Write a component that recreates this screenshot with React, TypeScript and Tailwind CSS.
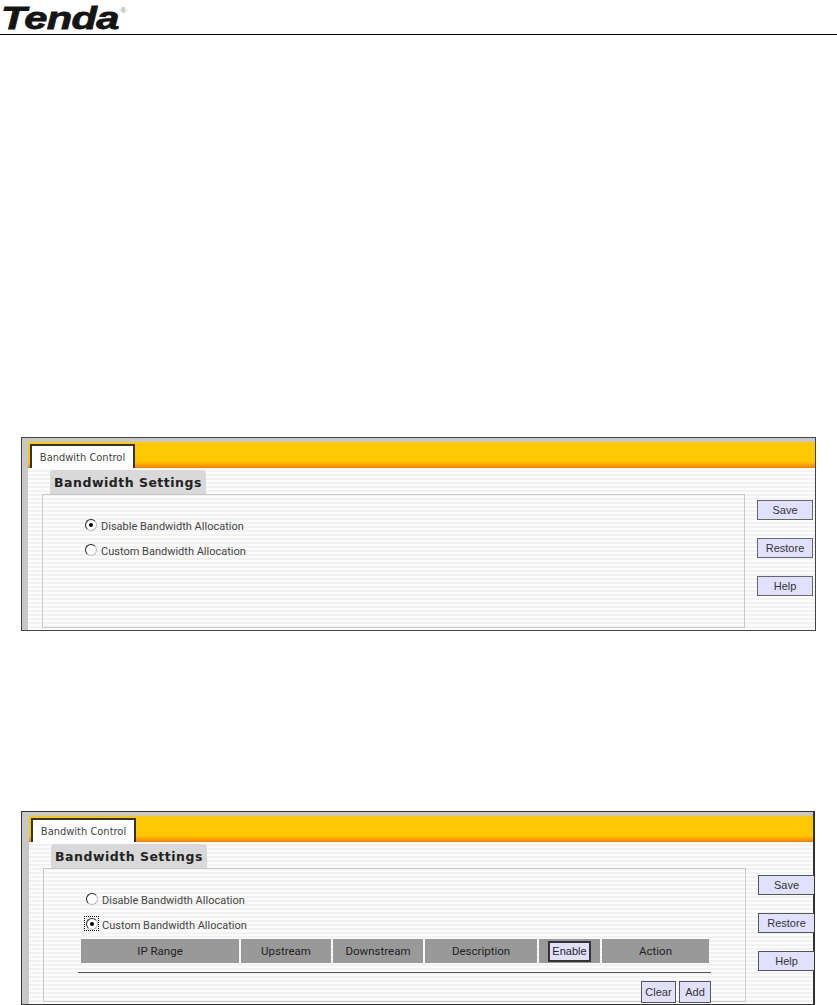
import * as React from 'react'

const tahoma = 'font-["DejaVu_Sans_Condensed","DejaVu_Sans",sans-serif]'
const stripes =
  'bg-[repeating-linear-gradient(to_bottom,#fcfcfc_0px,#fcfcfc_2px,#f2f2f2_2px,#f2f2f2_4px)]'

const Radio = ({ checked, focused }: { checked?: boolean; focused?: boolean }) => (
  <span
    className={
      focused
        ? 'flex size-[15px] shrink-0 items-center justify-center border border-dotted border-black'
        : 'flex size-[15px] shrink-0 items-center justify-center'
    }
  >
    <span className="flex size-3 items-center justify-center rounded-full border border-[#bbb] border-t-[#222] border-l-[#222] bg-white">
      {checked && <span className="size-1 rounded-full bg-black" />}
    </span>
  </span>
)

const Option = ({ label, checked, focused }: { label: string; checked?: boolean; focused?: boolean }) => (
  <div className="flex h-[25px] items-start gap-[3px]">
    <Radio checked={checked} focused={focused} />
    <span className="mt-[3px] text-[11px] leading-[14px] text-[#444] font-[Roboto,sans-serif]">{label}</span>
  </div>
)

const SideButton = ({ label, clipped }: { label: string; clipped?: boolean }) => (
  <div
    className={
      clipped
        ? 'flex h-5 w-[56px] items-center justify-center border border-r-0 border-[#555] bg-[#e1e1ff] text-[11px] text-[#333] font-["Liberation_Sans",sans-serif]'
        : 'flex h-5 w-[56px] items-center justify-center border border-[#666] bg-[#e1e1ff] text-[11px] text-[#333] font-["Liberation_Sans",sans-serif]'
    }
  >
    {label}
  </div>
)

const HeadCell = ({ className, children }: { className: string; children: React.ReactNode }) => (
  <div
    className={`flex h-6 items-center justify-center bg-[#999999] pt-[1px] text-[11.5px] text-[#222] font-[Roboto,sans-serif] ${className}`}
  >
    {children}
  </div>
)

const Panel = ({ second, children }: { second?: boolean; children: React.ReactNode }) => (
  <div
    className={
      second
        ? 'ml-[21px] flex h-[194px] w-[794px] flex-col border-t border-b border-l border-r-2 border-[#333] bg-white'
        : 'ml-[21px] flex h-[194px] w-[795px] flex-col border border-[#444] bg-white'
    }
  >
    <div className="h-1 shrink-0 bg-[#c8c8c8]" />
    <div className={second ? 'flex min-h-0 flex-1 border-l-[7px] border-[#c8c8c8]' : 'flex min-h-0 flex-1 border-l-[6px] border-[#c8c8c8]'}>
      <div className="flex min-w-0 flex-1 flex-col">
        <div className="flex h-[26px] shrink-0 items-end bg-[linear-gradient(to_bottom,#ffc800_0%,#ffc800_76%,#ff9a00_90%,#ff7a00_100%)] pl-[2px]">
          <div
            className={`flex h-6 w-[105px] items-center justify-center border-x-2 border-t-2 border-x-[#333] border-t-[#333] bg-white pt-[2px] text-[11px] text-[#444] ${tahoma}`}
          >
            Bandwith Control
          </div>
        </div>
        <div className={`flex min-h-0 flex-1 ${stripes}`}>
          <div className="flex w-[717px] shrink-0 flex-col pl-[14px] pb-[2px]">
            <div className="mt-[2px] ml-[8px] flex h-6 w-[156px] shrink-0 items-center justify-center rounded-t-[4px] bg-[#d9d9d9] pt-[2px] text-[12.5px] font-bold tracking-[0.5px] text-[#222] font-['DejaVu_Sans',sans-serif]">
              Bandwidth Settings
            </div>
            <div className="min-h-0 flex-1 border border-[#c8c8c8]">{children}</div>
          </div>
          <div className={second ? 'ml-[12px] flex flex-col gap-[18px] pt-[33px]' : 'ml-[12px] flex flex-col gap-[18px] pt-[32px]'}>
            <SideButton label="Save" clipped={second} />
            <SideButton label="Restore" clipped={second} />
            <SideButton label="Help" clipped={second} />
          </div>
        </div>
      </div>
    </div>
  </div>
)

export default function App() {
  return (
    <div className="h-[1005px] w-[837px] overflow-hidden bg-white">
      <div className="flex h-[35px] items-start border-b border-black pl-[1px]">
        {/* logo is live text, stretched to the mark's wide proportions */}
        <span className="mt-[1px] origin-left scale-x-[1.3] text-[32px] leading-[34px] font-bold tracking-[-0.5px] text-[#151515] italic font-['Liberation_Sans',sans-serif] [-webkit-text-stroke:0.8px_#151515]">
          Tenda
        </span>
        <span className="mt-[7px] ml-[29px] text-[8px] leading-none text-[#888] font-['Liberation_Sans',sans-serif]">®</span>
      </div>

      <div className="mt-[402px]">
        <Panel>
          <div className="pt-[22px] pl-[40px]">
            <Option label="Disable Bandwidth Allocation" checked />
            <Option label="Custom Bandwidth Allocation" />
          </div>
        </Panel>
      </div>

      <div className="mt-[180px]">
        <Panel second>
          <div className="pt-[22px] pl-[40px]">
            <Option label="Disable Bandwidth Allocation" />
            <Option label="Custom Bandwidth Allocation" checked focused />
          </div>
          <div className="mt-[-2px] ml-[37px] flex w-[628px] gap-[2px]">
            <HeadCell className="w-[158px]">IP Range</HeadCell>
            <HeadCell className="w-[90px]">Upstream</HeadCell>
            <HeadCell className="w-[90px]">Downstream</HeadCell>
            <HeadCell className="w-[112px]">Description</HeadCell>
            <HeadCell className="w-[61px]">
              <span className="flex h-[21px] w-[43px] items-center justify-center border-2 border-[#333] bg-[#e1e1ff] font-['Liberation_Sans',sans-serif] text-[11px]">
                Enable
              </span>
            </HeadCell>
            <HeadCell className="w-[107px]">Action</HeadCell>
          </div>
          <div className="mt-[9px] ml-[34px] h-0 w-[633px] border-t border-[#555]" />
          <div className="mt-[8px] ml-[34px] flex w-[633px] justify-end gap-[3px]">
            <span className="flex h-[22px] w-[35px] items-center justify-center border border-[#555] bg-[#e1e1ff] text-[11px] text-[#333] font-['Liberation_Sans',sans-serif]">
              Clear
            </span>
            <span className="flex h-[22px] w-[32px] items-center justify-center border border-[#555] bg-[#e1e1ff] text-[11px] text-[#333] font-['Liberation_Sans',sans-serif]">
              Add
            </span>
          </div>
        </Panel>
      </div>
    </div>
  )
}
